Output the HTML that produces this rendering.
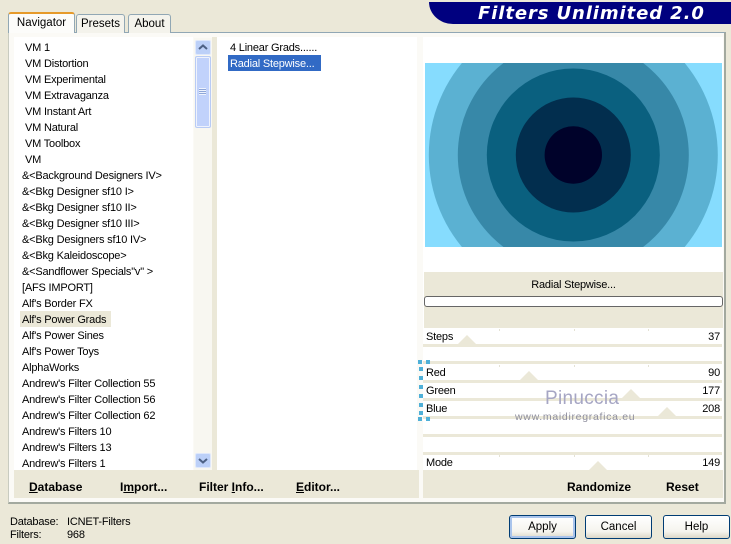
<!DOCTYPE html>
<html><head><meta charset="utf-8">
<style>
html,body{margin:0;padding:0}
body{width:731px;height:541px;position:relative;overflow:hidden;background:#ebe8d8;font-family:"Liberation Sans",sans-serif;font-size:11px;letter-spacing:-.2px;color:#000}
.a{position:absolute}
.t{position:absolute;white-space:nowrap;line-height:18px;height:16px}
.tab{position:absolute;box-sizing:border-box;border:1px solid #91a7b4;border-bottom:none;border-radius:3px 3px 0 0;background:#f4f3ec;text-align:center;line-height:17px;font-size:11.5px;letter-spacing:0}
.t.b{font-weight:bold;font-size:12px;letter-spacing:0;line-height:16px}
.btn{position:absolute;top:515px;height:24px;width:67px;box-sizing:border-box;border:1px solid #003c74;border-radius:3px;background:linear-gradient(#fff,#f5f4ee 70%,#dcd8c8);text-align:center;line-height:22px;font-size:11.5px;letter-spacing:0}
.tri{position:absolute;width:0;height:0;border-left:9px solid transparent;border-right:9px solid transparent;border-bottom:9px solid #ebe8d8}
.line{position:absolute;left:423px;width:299px;height:3px;background:#ebe8d8}
.dot{position:absolute;background:#4fb0d8;width:4px;height:4px}
.tick{position:absolute;width:1px;height:2px;background:#e4e2d4}
</style></head><body>
<!-- tab page -->
<div class="a" style="left:8px;top:32px;width:718px;height:472px;box-sizing:border-box;background:#fbfaf6;border:1px solid #91a7b4;border-left-color:#c8cbc0;border-bottom:2px solid #a3a99f;border-right:2px solid #a3a99f"></div>
<div class="tab" style="left:76px;top:14px;width:49px;height:19px;line-height:18px">Presets</div>
<div class="tab" style="left:128px;top:14px;width:43px;height:19px;line-height:18px">About</div>
<div class="tab" style="left:8px;top:12px;width:67px;height:21px;background:#fcfcfa;border-top:2px solid #e69a2a;line-height:18px;border-bottom:none">Navigator</div>

<!-- left list -->
<div class="a" style="left:14px;top:37px;width:179px;height:433px;background:#fff;overflow:hidden"></div>
<div class="a" style="left:20px;top:311px;width:91px;height:16px;background:#ebe8d8"></div>
<div class="t" style="left:25px;top:39px">VM 1</div>
<div class="t" style="left:25px;top:55px">VM Distortion</div>
<div class="t" style="left:25px;top:71px">VM Experimental</div>
<div class="t" style="left:25px;top:87px">VM Extravaganza</div>
<div class="t" style="left:25px;top:103px">VM Instant Art</div>
<div class="t" style="left:25px;top:119px">VM Natural</div>
<div class="t" style="left:25px;top:135px">VM Toolbox</div>
<div class="t" style="left:25px;top:151px">VM</div>
<div class="t" style="left:22px;top:167px">&amp;&lt;Background Designers IV&gt;</div>
<div class="t" style="left:22px;top:183px">&amp;&lt;Bkg Designer sf10 I&gt;</div>
<div class="t" style="left:22px;top:199px">&amp;&lt;Bkg Designer sf10 II&gt;</div>
<div class="t" style="left:22px;top:215px">&amp;&lt;Bkg Designer sf10 III&gt;</div>
<div class="t" style="left:22px;top:231px">&amp;&lt;Bkg Designers sf10 IV&gt;</div>
<div class="t" style="left:22px;top:247px">&amp;&lt;Bkg Kaleidoscope&gt;</div>
<div class="t" style="left:22px;top:263px">&amp;&lt;Sandflower Specials"v" &gt;</div>
<div class="t" style="left:22px;top:279px">[AFS IMPORT]</div>
<div class="t" style="left:22px;top:295px">Alf's Border FX</div>
<div class="t" style="left:22px;top:311px">Alf's Power Grads</div>
<div class="t" style="left:22px;top:327px">Alf's Power Sines</div>
<div class="t" style="left:22px;top:343px">Alf's Power Toys</div>
<div class="t" style="left:22px;top:359px">AlphaWorks</div>
<div class="t" style="left:22px;top:375px">Andrew's Filter Collection 55</div>
<div class="t" style="left:22px;top:391px">Andrew's Filter Collection 56</div>
<div class="t" style="left:22px;top:407px">Andrew's Filter Collection 62</div>
<div class="t" style="left:22px;top:423px">Andrew's Filters 10</div>
<div class="t" style="left:22px;top:439px">Andrew's Filters 13</div>
<div class="t" style="left:22px;top:455px">Andrew's Filters 1</div>

<!-- scrollbar -->
<div class="a" style="left:194px;top:38px;width:18px;height:432px;background:#f8f7f1"></div>
<div class="a" style="left:195px;top:40px;width:16px;height:15px;box-sizing:border-box;background:#bcd0f8;border:1px solid #dfe8fb;border-radius:2px">
<svg width="14" height="13" style="display:block"><path d="M3 8L7 4.5L11 8" fill="none" stroke="#4d6185" stroke-width="2"/></svg></div>
<div class="a" style="left:195px;top:56px;width:16px;height:72px;box-sizing:border-box;background:#c1d2fb;border:1px solid #b8cbf5;border-radius:2px;box-shadow:inset 0 0 0 1px #eef2fd"></div>
<div class="a" style="left:199px;top:88px;width:7px;height:7px;background:repeating-linear-gradient(#eef3fe 0 1px,#8ea6d8 1px 2px)"></div>
<div class="a" style="left:195px;top:453px;width:16px;height:15px;box-sizing:border-box;background:#bcd0f8;border:1px solid #dfe8fb;border-radius:2px">
<svg width="14" height="13" style="display:block"><path d="M3 5L7 8.5L11 5" fill="none" stroke="#4d6185" stroke-width="2"/></svg></div>

<div class="a" style="left:212px;top:37px;width:5px;height:433px;background:#ebe8d8"></div>

<!-- middle list -->
<div class="a" style="left:217px;top:37px;width:200px;height:433px;background:#fff"></div>
<div class="t" style="left:230px;top:39px">4 Linear Grads......</div>
<div class="a" style="left:228px;top:55px;width:93px;height:16px;background:#316ac5"></div>
<div class="t" style="left:230px;top:55px;color:#fff">Radial Stepwise...</div>

<!-- bottom bars -->
<div class="a" style="left:14px;top:470px;width:405px;height:28px;background:#ebe8d8"></div>
<div class="a" style="left:423px;top:470px;width:300px;height:28px;background:#ebe8d8"></div>
<div class="t b" style="left:29px;top:479px"><u>D</u>atabase</div>
<div class="t b" style="left:120px;top:479px">I<u>m</u>port...</div>
<div class="t b" style="left:199px;top:479px">Filter <u>I</u>nfo...</div>
<div class="t b" style="left:296px;top:479px"><u>E</u>ditor...</div>
<div class="t b" style="left:567px;top:479px">Randomize</div>
<div class="t b" style="left:666px;top:479px">Reset</div>

<!-- right panel -->
<div class="a" style="left:423px;top:37px;width:300px;height:433px;background:#fff"></div>
<svg class="a" style="left:425px;top:63px" width="297" height="184" viewBox="425 63 297 184">
<rect x="425" y="63" width="297" height="184" fill="#86dcfe"/>
<circle cx="573.3" cy="155" r="144.5" fill="#5bb1d2"/>
<circle cx="573.3" cy="155" r="115.5" fill="#3788a8"/>
<circle cx="573.3" cy="155" r="86.5" fill="#0a607f"/>
<circle cx="573.3" cy="155" r="57.5" fill="#022e4e"/>
<circle cx="573.3" cy="155" r="28.7" fill="#00022a"/>
</svg>
<div class="a" style="left:424px;top:272px;width:299px;height:56px;background:#ebe8d8"></div>
<div class="t" style="left:424px;top:276px;width:299px;text-align:center">Radial Stepwise...</div>
<div class="a" style="left:424px;top:296px;width:299px;height:11px;box-sizing:border-box;background:#fff;border:1px solid #666;border-radius:3px"></div>

<div class="line" style="top:344px"></div>
<div class="line" style="top:361px"></div>
<div class="line" style="top:380px"></div>
<div class="line" style="top:398px"></div>
<div class="line" style="top:416px"></div>
<div class="line" style="top:434px"></div>
<div class="line" style="top:452px"></div>
<div class="tick" style="left:499px;top:329px"></div><div class="tick" style="left:574px;top:329px"></div><div class="tick" style="left:648px;top:329px"></div>
<div class="tick" style="left:499px;top:365px"></div><div class="tick" style="left:574px;top:365px"></div><div class="tick" style="left:648px;top:365px"></div>
<div class="tick" style="left:499px;top:455px"></div><div class="tick" style="left:574px;top:455px"></div><div class="tick" style="left:648px;top:455px"></div>
<div class="t" style="left:426px;top:328px">Steps</div><div class="t" style="right:11px;top:328px">37</div>
<div class="t" style="left:426px;top:364px">Red</div><div class="t" style="right:11px;top:364px">90</div>
<div class="t" style="left:426px;top:382px">Green</div><div class="t" style="right:11px;top:382px">177</div>
<div class="t" style="left:426px;top:400px">Blue</div><div class="t" style="right:11px;top:400px">208</div>
<div class="t" style="left:426px;top:454px">Mode</div><div class="t" style="right:11px;top:454px">149</div>
<div class="tri" style="left:458px;top:335px"></div>
<div class="tri" style="left:520px;top:371px"></div>
<div class="tri" style="left:622px;top:389px"></div>
<div class="tri" style="left:658px;top:407px"></div>
<div class="tri" style="left:589px;top:461px"></div>

<!-- selection dots -->
<div class="dot" style="left:418px;top:360px"></div><div class="dot" style="left:426px;top:360px"></div>
<div class="dot" style="left:419px;top:367px"></div><div class="dot" style="left:419px;top:376px"></div><div class="dot" style="left:419px;top:385px"></div><div class="dot" style="left:419px;top:394px"></div><div class="dot" style="left:419px;top:403px"></div><div class="dot" style="left:419px;top:411px"></div>
<div class="dot" style="left:418px;top:417px"></div><div class="dot" style="left:426px;top:417px"></div>

<!-- watermark -->
<div class="t" style="left:545px;top:389px;font-size:19px;line-height:20px;height:20px;color:#a6a6c4;letter-spacing:.3px">Pinuccia</div>
<div class="t" style="left:515px;top:408px;font-size:10.5px;color:#8f8f9e;letter-spacing:.7px">www.maidiregrafica.eu</div>

<!-- banner -->
<div class="a" style="left:429px;top:2px;width:302px;height:22px;background:#00007f;border-bottom-left-radius:24px 22px"></div>
<div class="t" style="left:478px;top:4px;font-family:'DejaVu Sans',sans-serif;font-size:18px;line-height:20px;height:20px;font-weight:bold;font-style:italic;color:#fff;letter-spacing:.9px">Filters Unlimited 2.0</div>

<!-- status -->
<div class="t" style="left:10px;top:513px">Database:</div>
<div class="t" style="left:67px;top:513px">ICNET-Filters</div>
<div class="t" style="left:10px;top:526px">Filters:</div>
<div class="t" style="left:67px;top:526px">968</div>
<div class="btn" style="left:509px;box-shadow:inset 0 0 0 2px #a9c4ec">Apply</div>
<div class="btn" style="left:585px">Cancel</div>
<div class="btn" style="left:663px">Help</div>
</body></html>
